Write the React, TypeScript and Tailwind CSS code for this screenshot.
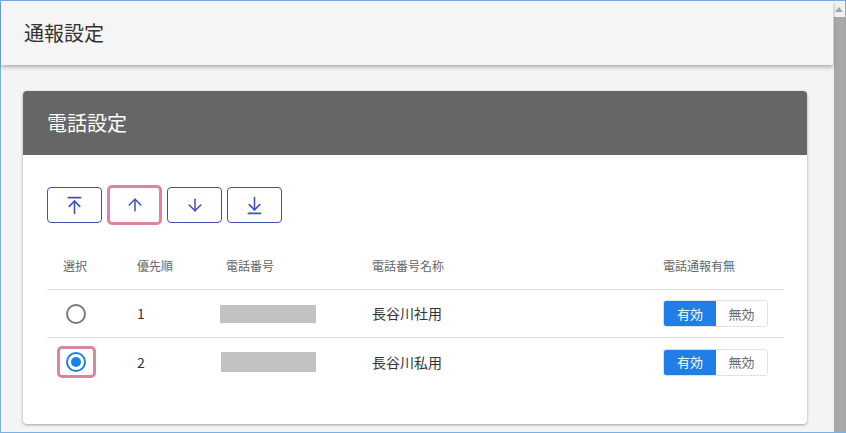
import { ArrowUp, ArrowDown, ArrowUpToLine, ArrowDownToLine } from "lucide-react";

const font = { fontFamily: '"Noto Sans CJK JP", "Noto Sans", sans-serif' };

type Row = { no: number; name: string; selected: boolean; barClass: string };

const rows: Row[] = [
  { no: 1, name: "長谷川社用", selected: false, barClass: "ml-[7px] h-[18px] w-[96px]" },
  { no: 2, name: "長谷川私用", selected: true, barClass: "ml-[8px] h-[20px] w-[95px]" },
];

function Radio({ checked }: { checked: boolean }) {
  if (checked) {
    return (
      <div className="relative flex h-[20px] w-[20px] items-center justify-center">
        <div className="absolute -left-[9px] -top-[6px] h-[32px] w-[39px] rounded-[5px] border-[3px] border-[#d9869e]" />
        <div className="flex h-[20px] w-[20px] items-center justify-center rounded-full border-2 border-[#1e7fe8]">
          <div className="h-[10px] w-[10px] rounded-full bg-[#1e7fe8]" />
        </div>
      </div>
    );
  }
  return <div className="h-[20px] w-[20px] rounded-full border-2 border-[#7a7a7a]" />;
}

function Toggle() {
  return (
    <div className="flex h-[27px] w-[105px] overflow-hidden rounded-[3px] border border-[#e2e2e2] text-[13px]">
      <div className="flex w-[52px] items-center justify-center bg-[#1e7fe8] text-white">有効</div>
      <div className="flex flex-1 items-center justify-center bg-white text-[#6b6b6b]">無効</div>
    </div>
  );
}

export default function App() {
  const btn = "flex h-[36px] w-[55px] items-center justify-center rounded-[4px] border border-[#3f51b5] bg-white text-[#3f51b5]";
  return (
    <div className="flex h-[433px] w-[846px] border border-[#7aaee6] bg-[#f4f4f4]" style={font}>
      <div className="flex w-[832px] flex-col">
        <header className="relative z-10 flex h-[64px] shrink-0 items-center bg-[#f5f5f5] pl-[23px] text-[20px] text-[#333] shadow-[0_2px_4px_rgba(0,0,0,0.3)]">
          通報設定
        </header>

        <section className="ml-[22px] mt-[26px] w-[784px] overflow-hidden rounded-[4px] bg-white shadow-[0_1px_3px_rgba(0,0,0,0.35)]">
          <div className="flex h-[64px] items-center bg-[#666666] pl-[24px] text-[20px] text-white">電話設定</div>

          <div className="px-[24px] pb-[38px] pt-[30px]">
            <div className="flex items-center gap-[5px]">
              <button className={btn}>
                <ArrowUpToLine size={21} strokeWidth={1.8} />
              </button>
              <button className="flex h-[40px] w-[55px] items-center justify-center rounded-[5px] border-[3px] border-[#d9869e] bg-white text-[#3f51b5]">
                <ArrowUp size={20} strokeWidth={1.8} />
              </button>
              <button className={btn}>
                <ArrowDown size={20} strokeWidth={1.8} />
              </button>
              <button className={btn}>
                <ArrowDownToLine size={21} strokeWidth={1.8} />
              </button>
            </div>

            <div className="mt-[17px] w-[737px]">
              <div className="flex h-[48px] items-center border-b border-[#e0e0e0] text-[12px] text-[#666]">
                <div className="w-[56px] text-center">選択</div>
                <div className="w-[110px] pl-[34px]">優先順</div>
                <div className="w-[143px] pl-[13px]">電話番号</div>
                <div className="w-[291px] pl-[16px]">電話番号名称</div>
                <div className="flex-1 pl-[16px]">電話通報有無</div>
              </div>
              {rows.map((r, i) => (
                <div
                  key={r.no}
                  className={`flex h-[48px] items-center text-[14px] text-[#333] ${i === 0 ? "border-b border-[#e0e0e0]" : ""}`}
                >
                  <div className="flex w-[56px] justify-center pl-[1px]">
                    <Radio checked={r.selected} />
                  </div>
                  <div className="w-[110px] pl-[34px]">{r.no}</div>
                  <div className="w-[143px]">
                    <div className={`${r.barClass} bg-[#c2c2c2]`} />
                  </div>
                  <div className="w-[291px] pl-[16px]">{r.name}</div>
                  <div className="flex-1 pl-[16px]">
                    <Toggle />
                  </div>
                </div>
              ))}
            </div>
          </div>
        </section>
      </div>

      <div className="flex w-[12px] flex-col bg-[#f1f1f1]">
        <div className="flex h-[16px] items-center justify-center">
          <div className="h-0 w-0 border-x-[4px] border-b-[5px] border-x-transparent border-b-[#a3a3a3]" />
        </div>
        <div className="ml-[1px] flex-1 bg-[#a8a8a8]" />
      </div>
    </div>
  );
}
